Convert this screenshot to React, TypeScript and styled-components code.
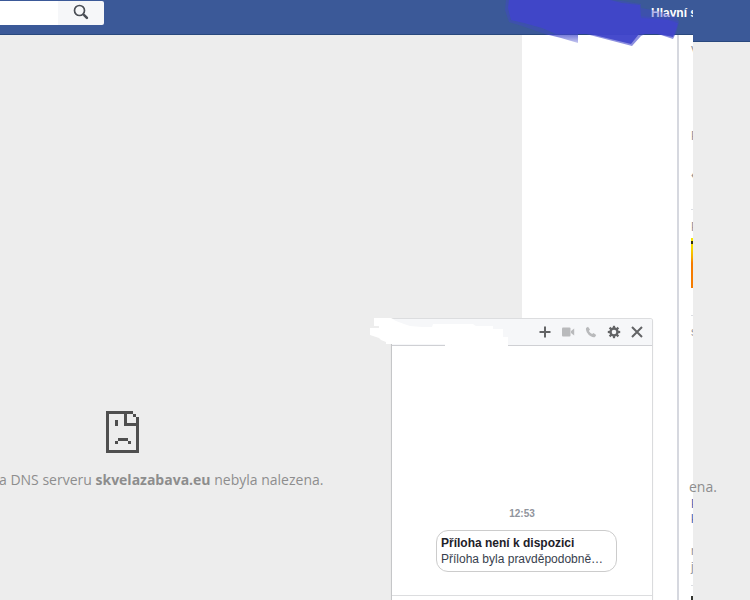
import React from "react";
import styled, { createGlobalStyle } from "styled-components";

const Global = createGlobalStyle`
  * { box-sizing: border-box; }
  body { margin: 0; background: #ededed; font-family: "Liberation Sans", Arial, sans-serif; overflow: hidden; }
`;

const Page = styled.div`
  position: relative;
  display: grid;
  grid-template-columns: minmax(0, 1fr) 57px;
  height: 100vh;
  overflow: hidden;
`;

const Screen = styled.section`
  display: flex;
  flex-direction: column;
  min-width: 0;
`;

const TopBar = styled.header<{ $tall?: boolean }>`
  display: flex;
  flex: none;
  justify-content: space-between;
  height: ${(p) => (p.$tall ? 42 : 35)}px;
  background: #3b5998;
  border-bottom: 1px solid #29487d;
  overflow: hidden;
`;

const Search = styled.form`
  display: flex;
  width: 104px;
  height: 24px;
  margin-top: 1px;
  border-radius: 0 2px 2px 0;
  overflow: hidden;
`;

const SearchInput = styled.input`
  flex: 1;
  min-width: 0;
  border: 0;
  padding: 0 4px;
  background: #fff;
  outline: none;
`;

const SearchButton = styled.button`
  display: flex;
  justify-content: center;
  align-items: flex-start;
  width: 46px;
  padding: 3px 0 0;
  border: 0;
  background: #f6f7f9;
`;

const NavLink = styled.a`
  width: 42px;
  overflow: hidden;
  white-space: nowrap;
  color: #fff;
  font-size: 12px;
  font-weight: bold;
  line-height: 26px;
  text-decoration: none;
`;

const Body = styled.div`
  display: flex;
  flex: 1;
  min-height: 0;
`;

const ErrorPane = styled.main`
  flex: 1;
  min-width: 0;
  padding-top: 376px;
  overflow: hidden;
  background: #ededed;
`;

const SadPage = styled.svg`
  display: block;
  width: 33px;
  height: 42px;
  margin-left: 106px;
`;

const ErrorText = styled.p`
  margin: 17px 0 0 -1px;
  font-family: "Open Sans", "Noto Sans", sans-serif;
  font-size: 14px;
  line-height: 20px;
  color: #8d8d8d;
  white-space: nowrap;
`;

const Feed = styled.div`
  width: 155px;
  background: #fff;
`;

const Ticker = styled.aside`
  width: 16px;
  padding-left: 12px;
  border-left: 2px solid #d6d8df;
  background: #fff;
  overflow: hidden;
`;

const TickerLine = styled.div<{ $gap: number; $tone?: string }>`
  height: 12px;
  margin-top: ${(p) => p.$gap}px;
  font-size: 12px;
  line-height: 12px;
  color: ${(p) => p.$tone ?? "#90949c"};
`;

const TickerRule = styled.hr<{ $gap: number }>`
  height: 1px;
  margin: ${(p) => p.$gap}px 0 0;
  border: 0;
  background: #dcdee3;
`;

const Thumb = styled.div<{ $gap: number; $dark?: boolean }>`
  height: 50px;
  margin-top: ${(p) => p.$gap}px;
  background: ${(p) =>
    p.$dark
      ? "#33352f"
      : "linear-gradient(#f7e600 0 3px, #33300a 3px 6px, #f5d800 6px 10px, #f7a800 20px, #f57c00 25px, #f57c00)"};
`;

const SideBody = styled.div`
  flex: 1;
  padding-top: 435px;
  background: #ededed;
`;

const SideText = styled(ErrorText)`
  margin: 0 0 0 -4px;
`;

const Chat = styled.section`
  position: absolute;
  right: 97px;
  bottom: 0;
  display: flex;
  flex-direction: column;
  width: 262px;
  height: 282px;
  border: 1px solid #ccc;
  border-color: #dcdddf #dadbdd #ccc #c5c6c8;
  border-bottom: 0;
  border-radius: 3px 3px 0 0;
  background: #fff;
  box-shadow: 0 1px 1px rgba(0, 0, 0, 0.12);
`;

const ChatBar = styled.header`
  display: flex;
  justify-content: flex-end;
  align-items: center;
  gap: 7px;
  height: 27px;
  padding-right: 7px;
  border-bottom: 1px solid #cfd0d4;
  border-radius: 2px 2px 0 0;
  background: #f6f7f9;
`;

const IconButton = styled.button<{ $muted?: boolean }>`
  display: grid;
  place-items: center;
  width: 16px;
  height: 16px;
  padding: 0;
  border: 0;
  background: none;
  color: ${(p) => (p.$muted ? "#b9babc" : "#636466")};
`;

const Messages = styled.div`
  flex: 1;
  padding-top: 162px;
`;

const Time = styled.time`
  display: block;
  text-align: center;
  font-size: 10px;
  line-height: 12px;
  font-weight: bold;
  color: #90949c;
`;

const Bubble = styled.article`
  width: 181px;
  height: 42px;
  margin: 10px 0 0 44px;
  padding: 4px;
  border: 1px solid #ccc;
  border-radius: 12px;
  font-size: 12px;
  line-height: 16px;
  color: #373e4d;
  white-space: nowrap;
`;

const BubbleTitle = styled.strong`
  display: block;
  color: #1d2129;
`;

const Composer = styled.footer`
  height: 5px;
  border-top: 1px solid #dcdddf;
`;

const NavMark = styled.svg`
  position: absolute;
  top: 0;
  right: 70px;
  width: 180px;
  height: 48px;
  pointer-events: none;
`;

const NameMark = styled.svg`
  position: absolute;
  left: -22px;
  top: -1px;
  width: 140px;
  height: 30px;
  pointer-events: none;
`;

const teeth = [0, 45, 90, 135, 180, 225, 270, 315];

export default function App() {
  return (
    <>
      <Global />
      <Page>
        <Screen>
          <TopBar>
            <Search onSubmit={(e) => e.preventDefault()}>
              <SearchInput aria-label="Hledat" />
              <SearchButton aria-label="Hledat">
                <svg width="16" height="16" viewBox="0 0 16 16" fill="none" stroke="#4b4f56">
                  <circle cx="6.5" cy="6.5" r="5" strokeWidth="1.7" />
                  <path d="M10 10l1.5 1.5" strokeWidth="1.7" />
                  <path d="M11.4 11.4l2.5 2.5" strokeWidth="2.6" strokeLinecap="round" />
                </svg>
              </SearchButton>
            </Search>
            <NavLink href="#">Hlavní stránka</NavLink>
          </TopBar>
          <Body>
            <ErrorPane>
              <SadPage viewBox="0 0 33 42" fill="#4f4f4f" shapeRendering="crispEdges" aria-hidden="true">
                <path d="M0 0h27v3H3v36h27V6h3v36H0z" />
                <path d="M27 3h3v3h-3zM18 3h3v9h9v3H18zM9 9h3v6H9zM12 27h10v3H12zM9 30h3v3H9zM22 30h3v3h-3z" />
              </SadPage>
              <ErrorText>
                a DNS serveru <b>skvelazabava.eu</b> nebyla nalezena.
              </ErrorText>
            </ErrorPane>
            <Feed />
            <Ticker>
              <TickerLine $gap={10}>V</TickerLine>
              <TickerLine $gap={73}>P</TickerLine>
              <TickerLine $gap={27}>♦</TickerLine>
              <TickerRule $gap={28} />
              <TickerLine $gap={11}>P</TickerLine>
              <Thumb $gap={5} />
              <TickerRule $gap={27} />
              <TickerLine $gap={10}>s</TickerLine>
              <TickerLine $gap={160} $tone="#4267b2">P</TickerLine>
              <TickerLine $gap={3} $tone="#4267b2">k</TickerLine>
              <TickerLine $gap={20}>n</TickerLine>
              <TickerLine $gap={4}>j</TickerLine>
              <TickerRule $gap={12} />
              <Thumb $gap={10} $dark />
            </Ticker>
          </Body>
        </Screen>
        <Screen>
          <TopBar $tall />
          <SideBody>
            <SideText>ena.</SideText>
          </SideBody>
        </Screen>

        <NavMark viewBox="500 0 180 48" aria-hidden="true">
          <defs>
            <linearGradient id="smear" x1="0" y1="34" x2="0" y2="43" gradientUnits="userSpaceOnUse">
              <stop offset="0" stopColor="#4045ca" stopOpacity=".75" />
              <stop offset="1" stopColor="#4045ca" stopOpacity=".3" />
            </linearGradient>
          </defs>
          <path fill="url(#smear)" d="M545 34L561 38 578 43V34z" />
          <path fill="#4045ca" opacity=".6" d="M586 34L632 46 641 36 645 34zM655 33L673 39 676 33z" />
          <path fill="#4045ca" opacity=".4" d="M506 0L505 10 509 22 522 26 545 34H676L679 22 670 19 641 16V4L622 1 612 0z" />
          <path fill="#4045ca" opacity=".92" d="M509 0L508 8 511 20 524 23 542 28 556 34H590L631 44 639 34H657L673 37 676 30 678 23 668 20 641 18 640 5 622 3 610 0z" />
          <path fill="#4045ca" opacity=".4" d="M641 8L652 10 661 12 676 17 679 22H641z" />
        </NavMark>

        <Chat>
          <ChatBar>
            <IconButton aria-label="Přidat">
              <svg width="12" height="12" viewBox="0 0 12 12" stroke="currentColor" strokeWidth="2">
                <path d="M6 .5v11M.5 6h11" />
              </svg>
            </IconButton>
            <IconButton $muted aria-label="Videohovor">
              <svg width="13" height="10" viewBox="0 0 13 10" fill="currentColor">
                <rect y=".5" width="8.5" height="9" rx="1" />
                <path d="M9 4L12.2 1.5V8.5L9 6z" />
              </svg>
            </IconButton>
            <IconButton $muted aria-label="Hovor">
              <svg width="12" height="12" viewBox="0 0 12 12" fill="currentColor">
                <path d="M1 2L3 .8 5 3.6 3.9 5Q5 7.1 7.1 8L8.5 7 11.2 9 10 11Q8.3 11.7 5.8 10.2 3.2 8.8 1.8 6.2.5 3.5 1 2z" />
              </svg>
            </IconButton>
            <IconButton aria-label="Nastavení">
              <svg width="14" height="14" viewBox="-7 -7 14 14" fill="currentColor">
                <circle r="3.5" fill="none" stroke="currentColor" strokeWidth="2.4" />
                {teeth.map((a) => (
                  <rect key={a} x="-1.1" y="-6.2" width="2.2" height="2.6" transform={`rotate(${a})`} />
                ))}
              </svg>
            </IconButton>
            <IconButton aria-label="Zavřít">
              <svg width="12" height="12" viewBox="0 0 12 12" stroke="currentColor" strokeWidth="2">
                <path d="M1 1l10 10M11 1L1 11" />
              </svg>
            </IconButton>
          </ChatBar>
          <Messages>
            <Time>12:53</Time>
            <Bubble>
              <BubbleTitle>Příloha není k dispozici</BubbleTitle>
              Příloha byla pravděpodobně…
            </Bubble>
          </Messages>
          <Composer />
          <NameMark viewBox="370 319 140 30" fill="#fff" aria-hidden="true">
            <path d="M374 319H391L396 322 404 325 410 327 422 328H432L433 325H473L476 327H493V330H503V338H508V347H445V345H386V343L381 341 379 339 373 337 370 336V329H379V327H374z" />
          </NameMark>
        </Chat>
      </Page>
    </>
  );
}
